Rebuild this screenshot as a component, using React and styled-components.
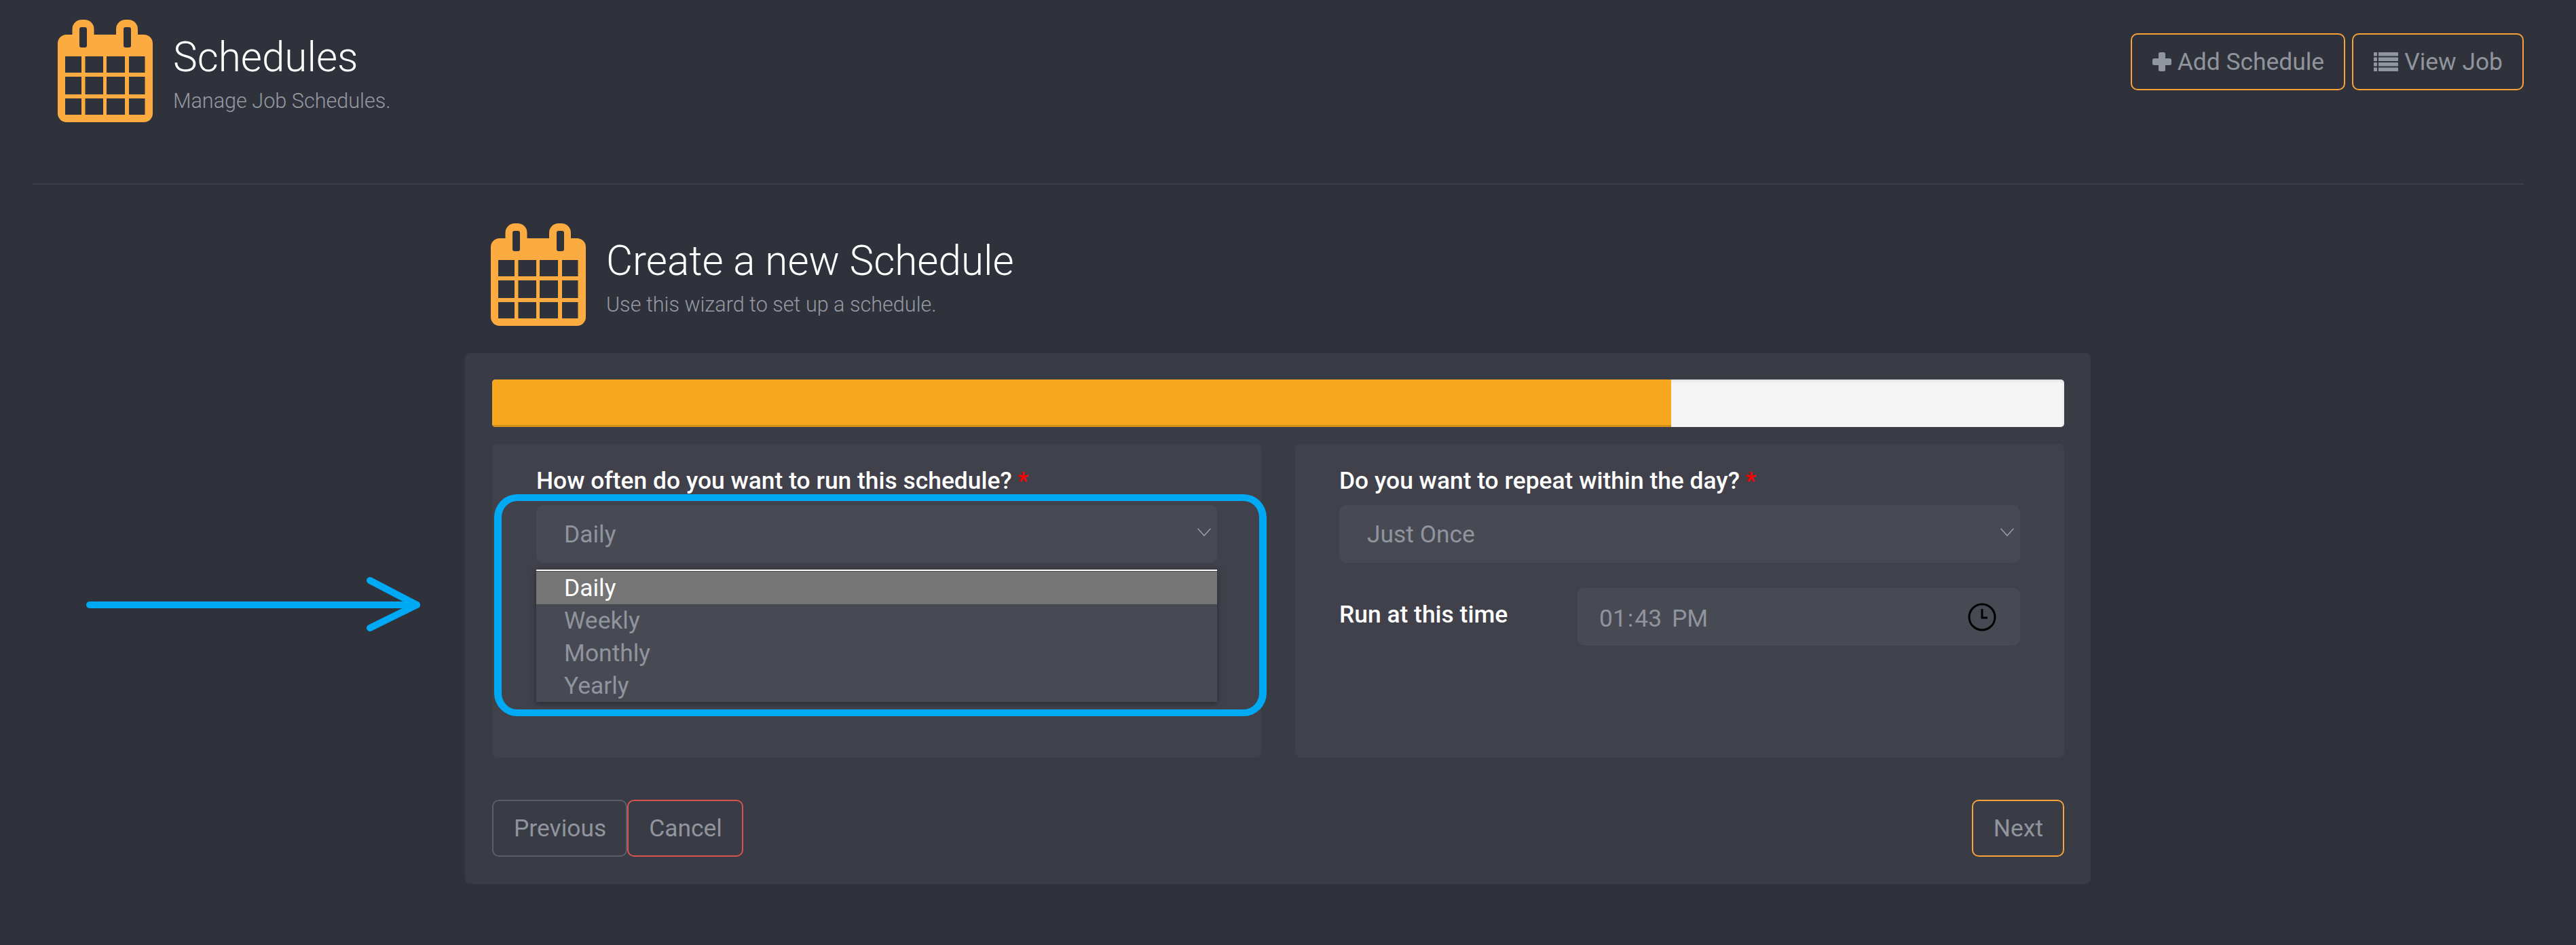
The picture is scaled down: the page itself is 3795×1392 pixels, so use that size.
import React from "react";
import styled, { createGlobalStyle } from "styled-components";

const GlobalStyle = createGlobalStyle`
  html, body {
    margin: 0;
    background: #30323b;
  }
  body {
    font-family: Roboto, "Liberation Sans", sans-serif;
    font-size: 35.4px;
    color: #8f949d;
  }
`;

const Page = styled.div`
  position: relative;
  width: 3795px;
  height: 1392px;
  box-sizing: border-box;
  padding: 0 77px 0 48px;
  overflow: hidden;
`;

const PageHeader = styled.header`
  display: flex;
  justify-content: space-between;
  align-items: flex-start;
  height: 272px;
  box-sizing: border-box;
  padding: 29px 0 0 37px;
  border-bottom: 2px solid #3d3e4b;
`;

const TitleBlock = styled.div`
  display: flex;
  align-items: flex-start;
  gap: 30px;
`;

const TitleText = styled.div`
  padding-top: 21px;
`;

const Title = styled.h1`
  margin: 0;
  font-size: 60.2px;
  font-weight: 300;
  line-height: 70px;
  color: #fff;
`;

const Subtitle = styled.div`
  margin-top: 10px;
  font-size: 30.6px;
  font-weight: 300;
  line-height: 38px;
  color: #959aa3;
`;

const HeaderActions = styled.div`
  display: flex;
  gap: 10px;
  padding-top: 20px;
`;

const Button = styled.button`
  display: inline-flex;
  align-items: center;
  justify-content: center;
  gap: 9px;
  height: 84px;
  box-sizing: border-box;
  padding: 0 29px 0 30px;
  background: transparent;
  border: 2px solid ${(p) => p.$border};
  border-radius: 10px;
  font-family: inherit;
  font-size: 35.4px;
  color: #8f949d;
`;

const Wizard = styled.section`
  width: 2395px;
  margin: 57px 0 0 637px;
`;

const WizardHeading = styled.div`
  padding-left: 38px;
  margin-bottom: 40px;
`;

const Card = styled.div`
  box-sizing: border-box;
  height: 782px;
  padding: 39px 39px 40px 40px;
  background: #3a3c45;
  border-radius: 8px;
`;

const ProgressTrack = styled.div`
  display: flex;
  height: 70px;
  background: #f5f5f5;
  border-radius: 5px;
  box-shadow: inset 0 2px 4px rgba(0, 0, 0, 0.1);
  overflow: hidden;
`;

const ProgressFill = styled.div`
  width: ${(p) => p.$percent}%;
  background: #f7a81f;
  box-shadow: inset 0 -3px 0 rgba(0, 0, 0, 0.15);
`;

const Panels = styled.div`
  display: grid;
  grid-template-columns: 1133px 1133px;
  gap: 50px;
  margin-top: 25px;
`;

const Panel = styled.div`
  height: 462px;
  box-sizing: border-box;
  padding: 34px 65px 0;
  background: #40414b;
  border-radius: 8px;
`;

const FieldLabel = styled.label`
  display: block;
  margin-bottom: 16px;
  font-weight: 500;
  line-height: 40px;
  color: #fff;
`;

const Required = styled.span`
  color: #f00;
`;

const SelectWrap = styled.div`
  position: relative;
`;

const SelectBox = styled.div`
  display: flex;
  align-items: center;
  justify-content: space-between;
  height: 85px;
  box-sizing: border-box;
  padding: 0 9px 0 41px;
  background: #484a53;
  border-radius: 10px;
`;

const Chevron = styled.svg`
  width: 20px;
  height: 12px;
  margin-top: -6px;
`;

const Dropdown = styled.ul`
  position: absolute;
  top: 95px;
  left: 0;
  right: 0;
  margin: 0;
  padding: 1px 0 0;
  list-style: none;
  background: #484a53;
  border-top: 2px solid #fff;
  box-shadow: 0 2px 8px rgba(0, 0, 0, 0.4);
`;

const Option = styled.li`
  height: 48px;
  padding-left: 41px;
  line-height: 48px;
  color: ${(p) => (p.$selected ? "#fff" : "#8f949d")};
  background: ${(p) => (p.$selected ? "#757575" : "transparent")};
`;

const TimeRow = styled.div`
  display: flex;
  margin-top: 37px;
`;

const TimeLabel = styled.label`
  flex: 0 0 351px;
  padding-top: 19px;
  font-weight: 500;
  line-height: 40px;
  color: #fff;
`;

const TimeInput = styled.div`
  flex: 1;
  display: flex;
  align-items: center;
  justify-content: space-between;
  height: 85px;
  box-sizing: border-box;
  padding: 0 35px 0 32px;
  background: #484a53;
  border-radius: 10px;
`;

const TimeValue = styled.span`
  padding-top: 5px;
  word-spacing: 6px;
`;

const TimeColon = styled.span`
  margin: 0 2px;
`;

const Actions = styled.div`
  display: flex;
  justify-content: space-between;
  margin-top: 62px;
`;

const ActionsLeft = styled.div`
  display: flex;
`;

// the blue annotations laid over the screenshot
const Highlight = styled.div`
  position: absolute;
  left: 728px;
  top: 728px;
  width: 1138px;
  height: 327px;
  box-sizing: border-box;
  border: 10px solid #00a9f4;
  border-width: 10px 11px;
  border-radius: 34px;
  pointer-events: none;
`;

const Arrow = styled.svg`
  position: absolute;
  left: 120px;
  top: 846px;
  width: 510px;
  height: 90px;
`;

const CELL_X = [[11, 24], [40.5, 26.5], [72, 27], [105, 23.5]];
const CELL_Y = [[54, 24], [84, 26], [116, 24]];

const CalendarIcon = () => (
  <svg width="140" height="151" viewBox="0 0 140 151">
    <rect x="0" y="22" width="140" height="129" rx="13" fill="#fcab40" />
    <rect x="21.5" y="0" width="32" height="44" rx="14" fill="#fcab40" />
    <rect x="86" y="0" width="32" height="44" rx="14" fill="#fcab40" />
    <rect x="32" y="11" width="11" height="30" rx="3" fill="#30323b" />
    <rect x="97" y="11" width="11" height="30" rx="3" fill="#30323b" />
    {CELL_Y.map(([y, h]) =>
      CELL_X.map(([x, w]) => (
        <rect key={`${x}-${y}`} x={x} y={y} width={w} height={h} fill="#30323b" />
      ))
    )}
  </svg>
);

const PlusIcon = () => (
  <svg width="28" height="28" viewBox="0 0 28 28" fill="#8f969e">
    <rect x="9" y="0" width="10" height="28" rx="2.5" />
    <rect x="0" y="9" width="28" height="10" rx="2.5" />
  </svg>
);

const ListIcon = () => (
  <svg width="36" height="28" viewBox="0 0 36 28" fill="#8f969e">
    {[0, 7.5, 15, 22.5].map((y) => (
      <g key={y}>
        <rect x="0" y={y} width="5" height="5.5" rx="0.5" />
        <rect x="7" y={y} width="29" height="5.5" rx="0.5" />
      </g>
    ))}
  </svg>
);

const ClockIcon = () => (
  <svg width="42" height="42" viewBox="0 0 42 42" fill="none" stroke="#000" strokeWidth="3">
    <circle cx="21" cy="21" r="19" />
    <path d="M21 9v13h8" />
  </svg>
);

const SelectChevron = () => (
  <Chevron viewBox="0 0 20 12" fill="none" stroke="#9aa0a8" strokeWidth="1.5">
    <path d="M0.5 0.5 10 11 19.5 0.5" />
  </Chevron>
);

const OPTIONS = ["Daily", "Weekly", "Monthly", "Yearly"];

const App = () => {
  return (
    <Page>
      <GlobalStyle />
      <PageHeader>
        <TitleBlock>
          <CalendarIcon />
          <TitleText>
            <Title>Schedules</Title>
            <Subtitle>Manage Job Schedules.</Subtitle>
          </TitleText>
        </TitleBlock>
        <HeaderActions>
          <Button $border="#f9a13a">
            <PlusIcon /> Add Schedule
          </Button>
          <Button $border="#f9a13a">
            <ListIcon /> View Job
          </Button>
        </HeaderActions>
      </PageHeader>

      <Wizard>
        <WizardHeading>
          <TitleBlock>
            <CalendarIcon />
            <TitleText>
              <Title>Create a new Schedule</Title>
              <Subtitle>Use this wizard to set up a schedule.</Subtitle>
            </TitleText>
          </TitleBlock>
        </WizardHeading>

        <Card>
          <ProgressTrack>
            <ProgressFill $percent={75} />
          </ProgressTrack>

          <Panels>
            <Panel>
              <FieldLabel>
                How often do you want to run this schedule? <Required>*</Required>
              </FieldLabel>
              <SelectWrap>
                <SelectBox>
                  Daily
                  <SelectChevron />
                </SelectBox>
                <Dropdown>
                  {OPTIONS.map((option, i) => (
                    <Option key={option} $selected={i === 0}>
                      {option}
                    </Option>
                  ))}
                </Dropdown>
              </SelectWrap>
            </Panel>

            <Panel>
              <FieldLabel>
                Do you want to repeat within the day? <Required>*</Required>
              </FieldLabel>
              <SelectBox>
                Just Once
                <SelectChevron />
              </SelectBox>
              <TimeRow>
                <TimeLabel>Run at this time</TimeLabel>
                <TimeInput>
                  <TimeValue>
                    01<TimeColon>:</TimeColon>43 PM
                  </TimeValue>
                  <ClockIcon />
                </TimeInput>
              </TimeRow>
            </Panel>
          </Panels>

          <Actions>
            <ActionsLeft>
              <Button $border="#5a5e70">Previous</Button>
              <Button $border="#d9534f">Cancel</Button>
            </ActionsLeft>
            <Button $border="#f9a13a">Next</Button>
          </Actions>
        </Card>
      </Wizard>

      <Highlight />
      <Arrow viewBox="0 0 510 90" fill="none" stroke="#00a9f4" strokeWidth="10" strokeLinecap="round" strokeLinejoin="round">
        <path d="M12 45H494" />
        <path d="M425 9 494 45 425 79" />
      </Arrow>
    </Page>
  );
};

export default App;
